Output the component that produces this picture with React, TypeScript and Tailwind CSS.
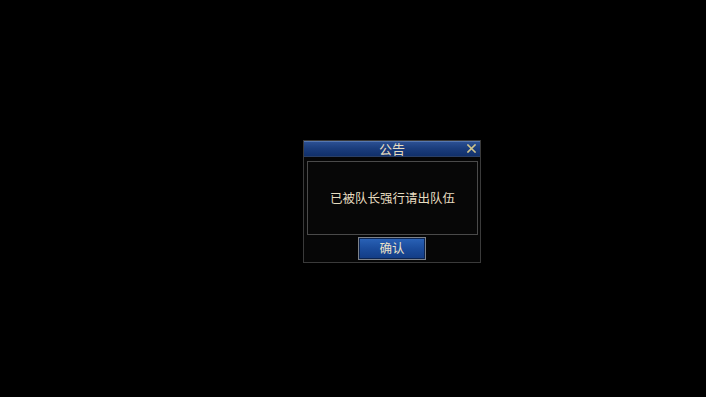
import React from 'react'

const cjk = '"Noto Sans CJK SC", "Noto Sans", sans-serif'

function CloseIcon() {
    return (
        <svg width="9" height="9" viewBox="0 0 9 9" className="block">
            <path
                d="M1 1 L8 8 M8 1 L1 8"
                stroke="#cfc48c"
                strokeWidth="1.6"
                strokeLinecap="square"
            />
        </svg>
    )
}

export default function App() {
    return (
        <div
            className="flex h-[397px] w-[706px] items-start bg-black pl-[303px] pt-[140px]"
            style={{ fontFamily: cjk }}
        >
            <div className="flex h-[123px] w-[178px] flex-col border border-[#3a3a3a] bg-[#060606]">
                <div className="relative flex h-[16px] items-center justify-center border-b border-[#2a3f66] bg-gradient-to-b from-[#2d5296] via-[#1b3d7c] to-[#11306a] shadow-[inset_0_1px_0_#5577b0]">
                    <span className="text-[13px] leading-none text-[#e6dcc0]">公告</span>
                    <span className="absolute right-[4px] top-[3px]">
                        <CloseIcon />
                    </span>
                </div>
                <div className="flex flex-1 flex-col px-[3px] pt-[4px]">
                    <div className="flex h-[74px] w-[171px] items-center justify-center border border-[#4a4a4a] bg-[#070707]">
                        <span className="text-[12.5px] leading-none text-[#e6dcc0]">
                            已被队长强行请出队伍
                        </span>
                    </div>
                    <div className="flex justify-center pt-[2px]">
                        <button className="flex h-[23px] w-[68px] items-center justify-center border border-[#7d828a] bg-gradient-to-b from-[#2a63b8] via-[#1b4c9c] to-[#133c84] shadow-[inset_0_0_0_1px_#0c2450]">
                            <span className="text-[12.5px] leading-none text-[#ece2c8]">确认</span>
                        </button>
                    </div>
                </div>
            </div>
        </div>
    )
}
